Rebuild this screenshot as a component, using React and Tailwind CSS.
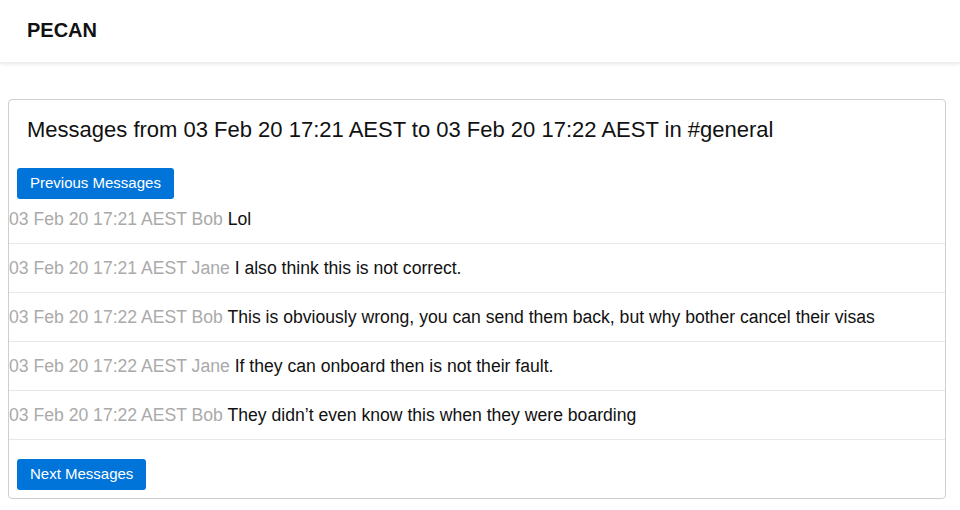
import React from "react";

const messages = [
  { t: "03 Feb 20 17:21 AEST", u: "Bob", m: "Lol" },
  { t: "03 Feb 20 17:21 AEST", u: "Jane", m: "I also think this is not correct." },
  { t: "03 Feb 20 17:22 AEST", u: "Bob", m: "This is obviously wrong, you can send them back, but why bother cancel their visas" },
  { t: "03 Feb 20 17:22 AEST", u: "Jane", m: "If they can onboard then is not their fault." },
  { t: "03 Feb 20 17:22 AEST", u: "Bob", m: "They didn\u2019t even know this when they were boarding" },
];

export default function App() {
  return (
    <div className="min-h-[510px] bg-white text-[#111]" style={{ fontFamily: '"Liberation Sans", Arial, sans-serif' }}>
      <header className="h-[63px] flex items-center px-[27px] shadow-[0_1px_4px_rgba(0,0,0,0.1)] border-b border-[#eee]">
        <span className="text-[20px] font-bold text-[#111] pb-[2px]">PECAN</span>
      </header>
      <main className="pt-[36px] pl-2">
        <div className="w-[938px] border border-[#cfcfcf] rounded-[4px] pb-2">
          <h1 className="px-[18px] pt-[15px] text-[22px] leading-[30px] text-[#111]">
            Messages from 03 Feb 20 17:21 AEST to 03 Feb 20 17:22 AEST in #general
          </h1>
          <button className="ml-2 mt-[23px] h-[31px] px-[13px] bg-[#0074d9] text-white text-[15px] rounded-[3px]">
            Previous Messages
          </button>
          <div className="mt-[8px]">
            {messages.map((x, i) => (
              <div
                key={i}
                className={`border-b border-[#e8e8e8] text-[17.6px] leading-6 ${i === 0 ? "pb-3" : "py-3"}`}
              >
                <span className="text-[#aaa]">{x.t} {x.u}</span> <span className="text-[#111]">{x.m}</span>
              </div>
            ))}
          </div>
          <button className="ml-2 mt-[19px] h-[31px] px-[13px] bg-[#0074d9] text-white text-[15px] rounded-[3px]">
            Next Messages
          </button>
        </div>
      </main>
    </div>
  );
}
